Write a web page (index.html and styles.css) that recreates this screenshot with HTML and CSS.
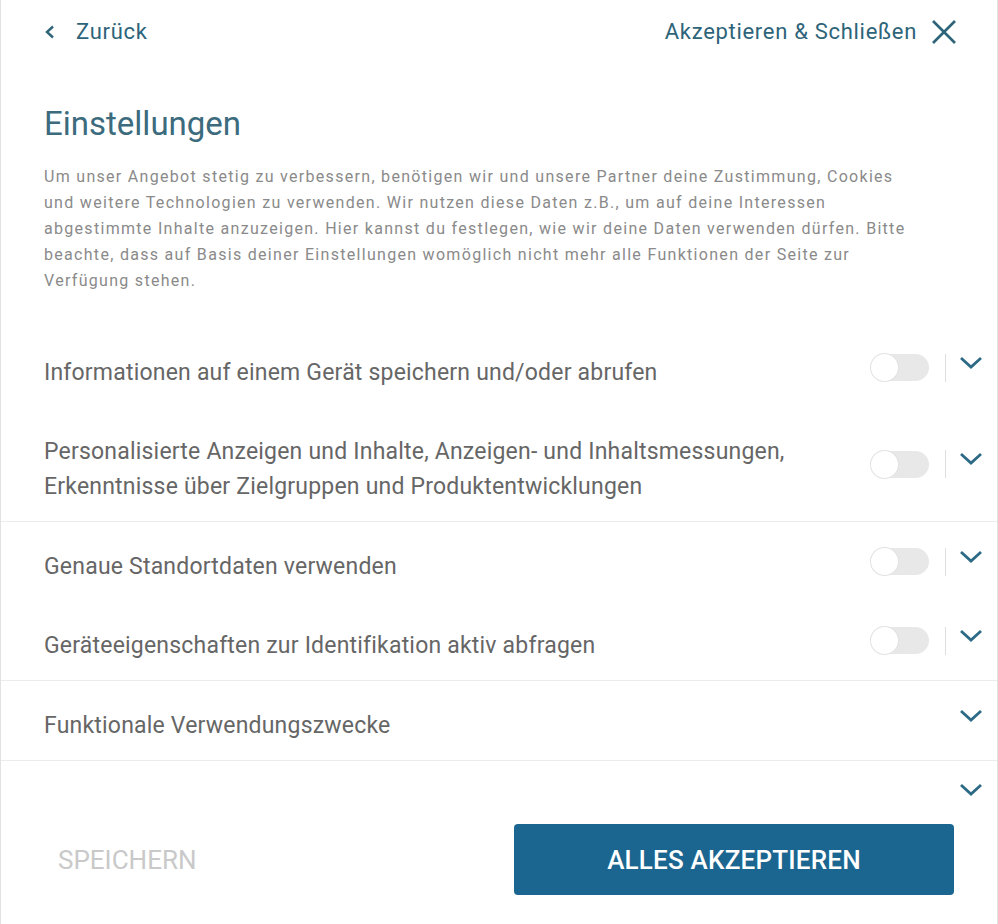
FILE: index.html
```html
<!DOCTYPE html>
<html lang="de">
<head>
    <meta charset="UTF-8">
    <meta name="viewport" content="width=device-width, initial-scale=1.0">
    <title>Einstellungen</title>
    <link rel="stylesheet" href="styles.css">
</head>
<body>
    <div class="panel">
        <!-- Top bar -->
        <header class="topbar">
            <a class="back-link" href="#">
                <svg class="back-icon" viewBox="0 0 12 14" width="12" height="14"><path d="M9 1.5 L3 7 L9 12.5"/></svg>
                <span>Zurück</span>
            </a>
            <a class="close-link" href="#">
                <span>Akzeptieren &amp; Schließen</span>
                <svg class="close-icon" viewBox="0 0 26 26" width="26" height="26"><path d="M2 2 L24 24 M24 2 L2 24"/></svg>
            </a>
        </header>

        <!-- Intro -->
        <section class="intro">
            <h1>Einstellungen</h1>
            <p>Um unser Angebot stetig zu verbessern, benötigen wir und unsere Partner deine Zustimmung, Cookies und weitere Technologien zu verwenden. Wir nutzen diese Daten z.B., um auf deine Interessen abgestimmte Inhalte anzuzeigen. Hier kannst du festlegen, wie wir deine Daten verwenden dürfen. Bitte beachte, dass auf Basis deiner Einstellungen womöglich nicht mehr alle Funktionen der Seite zur Verfügung stehen.</p>
        </section>

        <!-- Purposes -->
        <div class="purposes">
            <div class="group">
                <div class="purpose">
                    <span class="purpose-label">Informationen auf einem Gerät speichern und/oder abrufen</span>
                    <span class="toggle"></span>
                    <span class="divider-v"></span>
                    <svg class="chevron" viewBox="0 0 24 14"><path d="M2 2 L12 11 L22 2"/></svg>
                </div>
                <div class="purpose">
                    <span class="purpose-label">Personalisierte Anzeigen und Inhalte, Anzeigen- und Inhaltsmessungen, Erkenntnisse über Zielgruppen und Produktentwicklungen</span>
                    <span class="toggle"></span>
                    <span class="divider-v"></span>
                    <svg class="chevron" viewBox="0 0 24 14"><path d="M2 2 L12 11 L22 2"/></svg>
                </div>
            </div>
            <div class="group">
                <div class="purpose">
                    <span class="purpose-label">Genaue Standortdaten verwenden</span>
                    <span class="toggle"></span>
                    <span class="divider-v"></span>
                    <svg class="chevron" viewBox="0 0 24 14"><path d="M2 2 L12 11 L22 2"/></svg>
                </div>
                <div class="purpose">
                    <span class="purpose-label">Geräteeigenschaften zur Identifikation aktiv abfragen</span>
                    <span class="toggle"></span>
                    <span class="divider-v"></span>
                    <svg class="chevron" viewBox="0 0 24 14"><path d="M2 2 L12 11 L22 2"/></svg>
                </div>
            </div>
            <div class="group">
                <div class="purpose">
                    <span class="purpose-label">Funktionale Verwendungszwecke</span>
                    <svg class="chevron" viewBox="0 0 24 14"><path d="M2 2 L12 11 L22 2"/></svg>
                </div>
            </div>
            <div class="group group-cut">
                <div class="purpose">
                    <span class="purpose-label"></span>
                    <svg class="chevron" viewBox="0 0 24 14"><path d="M2 2 L12 11 L22 2"/></svg>
                </div>
            </div>
        </div>

        <!-- Footer buttons -->
        <footer class="actions">
            <button class="save-btn">Speichern</button>
            <button class="accept-btn">Alles akzeptieren</button>
        </footer>
    </div>
</body>
</html>
```

FILE: styles.css
```css
* {
    margin: 0;
    padding: 0;
    box-sizing: border-box;
}

body {
    font-family: Roboto, 'Liberation Sans', sans-serif;
    background: #fff;
    color: #666;
}

.panel {
    width: 998px;
    height: 924px;
    border-left: 1px solid #e2e2e2;
    border-right: 1px solid #e2e2e2;
    overflow: hidden;
    display: flex;
    flex-direction: column;
}

/* Top bar */
.topbar {
    display: flex;
    justify-content: space-between;
    align-items: center;
    padding: 18px 40px 0 43px;
    height: 46px;
}

.back-link,
.close-link {
    display: flex;
    align-items: center;
    color: #2e6479;
    text-decoration: none;
    font-size: 22px;
    letter-spacing: 0.7px;
    line-height: 28px;
}

.back-icon {
    fill: none;
    stroke: #2e6479;
    stroke-width: 2.4;
    margin-right: 20px;
}

.close-icon {
    fill: none;
    stroke: #2e6479;
    stroke-width: 2.6;
    margin-left: 14px;
}

/* Intro */
.intro {
    padding: 0 40px 0 43px;
}

.intro h1 {
    font-size: 33px;
    font-weight: 400;
    line-height: 36px;
    color: #3c6b7e;
    margin-top: 60px;
}

.intro p {
    font-size: 16px;
    letter-spacing: 1.3px;
    line-height: 26px;
    color: #8a8a8a;
    margin-top: 22px;
    max-width: 868px;
}

/* Purposes */
.purposes {
    margin-top: 34px;
}

.group {
    border-bottom: 1px solid #ececec;
}

.group-cut {
    height: 50px;
    border-bottom: none;
    overflow: hidden;
}

.purpose {
    display: flex;
    align-items: center;
    padding: 22px 14px 22px 43px;
}

.purpose-label {
    flex: 1;
    font-size: 23px;
    letter-spacing: 0.2px;
    line-height: 35px;
    color: #666;
    padding-top: 5px;
    margin-bottom: -5px;
    padding-right: 60px;
}

.toggle {
    position: relative;
    width: 58px;
    height: 27px;
    border-radius: 14px;
    background: #e8e8e8;
}

.toggle::before {
    content: "";
    position: absolute;
    left: 0;
    top: 0;
    width: 27px;
    height: 27px;
    border-radius: 50%;
    background: #fff;
    box-shadow: 0 0 0 1px #e2e2e2;
}

.divider-v {
    width: 1px;
    height: 28px;
    background: #dedede;
    margin: 0 13px 0 16px;
}

.chevron {
    width: 24px;
    height: 14px;
    fill: none;
    stroke: #2c6a85;
    stroke-width: 2.8;
    margin-bottom: 10px;
}

/* Footer */
.actions {
    display: flex;
    align-items: center;
    justify-content: space-between;
    padding: 13px 43px 29px 57px;
    background: #fff;
}

.save-btn {
    background: none;
    border: none;
    font-family: inherit;
    font-size: 26px;
    text-transform: uppercase;
    color: #c9c9c9;
}

.accept-btn {
    width: 440px;
    height: 71px;
    border: none;
    border-radius: 4px;
    background: #1b6690;
    color: #fff;
    font-family: inherit;
    font-size: 26px;
    font-weight: 500;
    letter-spacing: 0.2px;
    text-transform: uppercase;
}
```
